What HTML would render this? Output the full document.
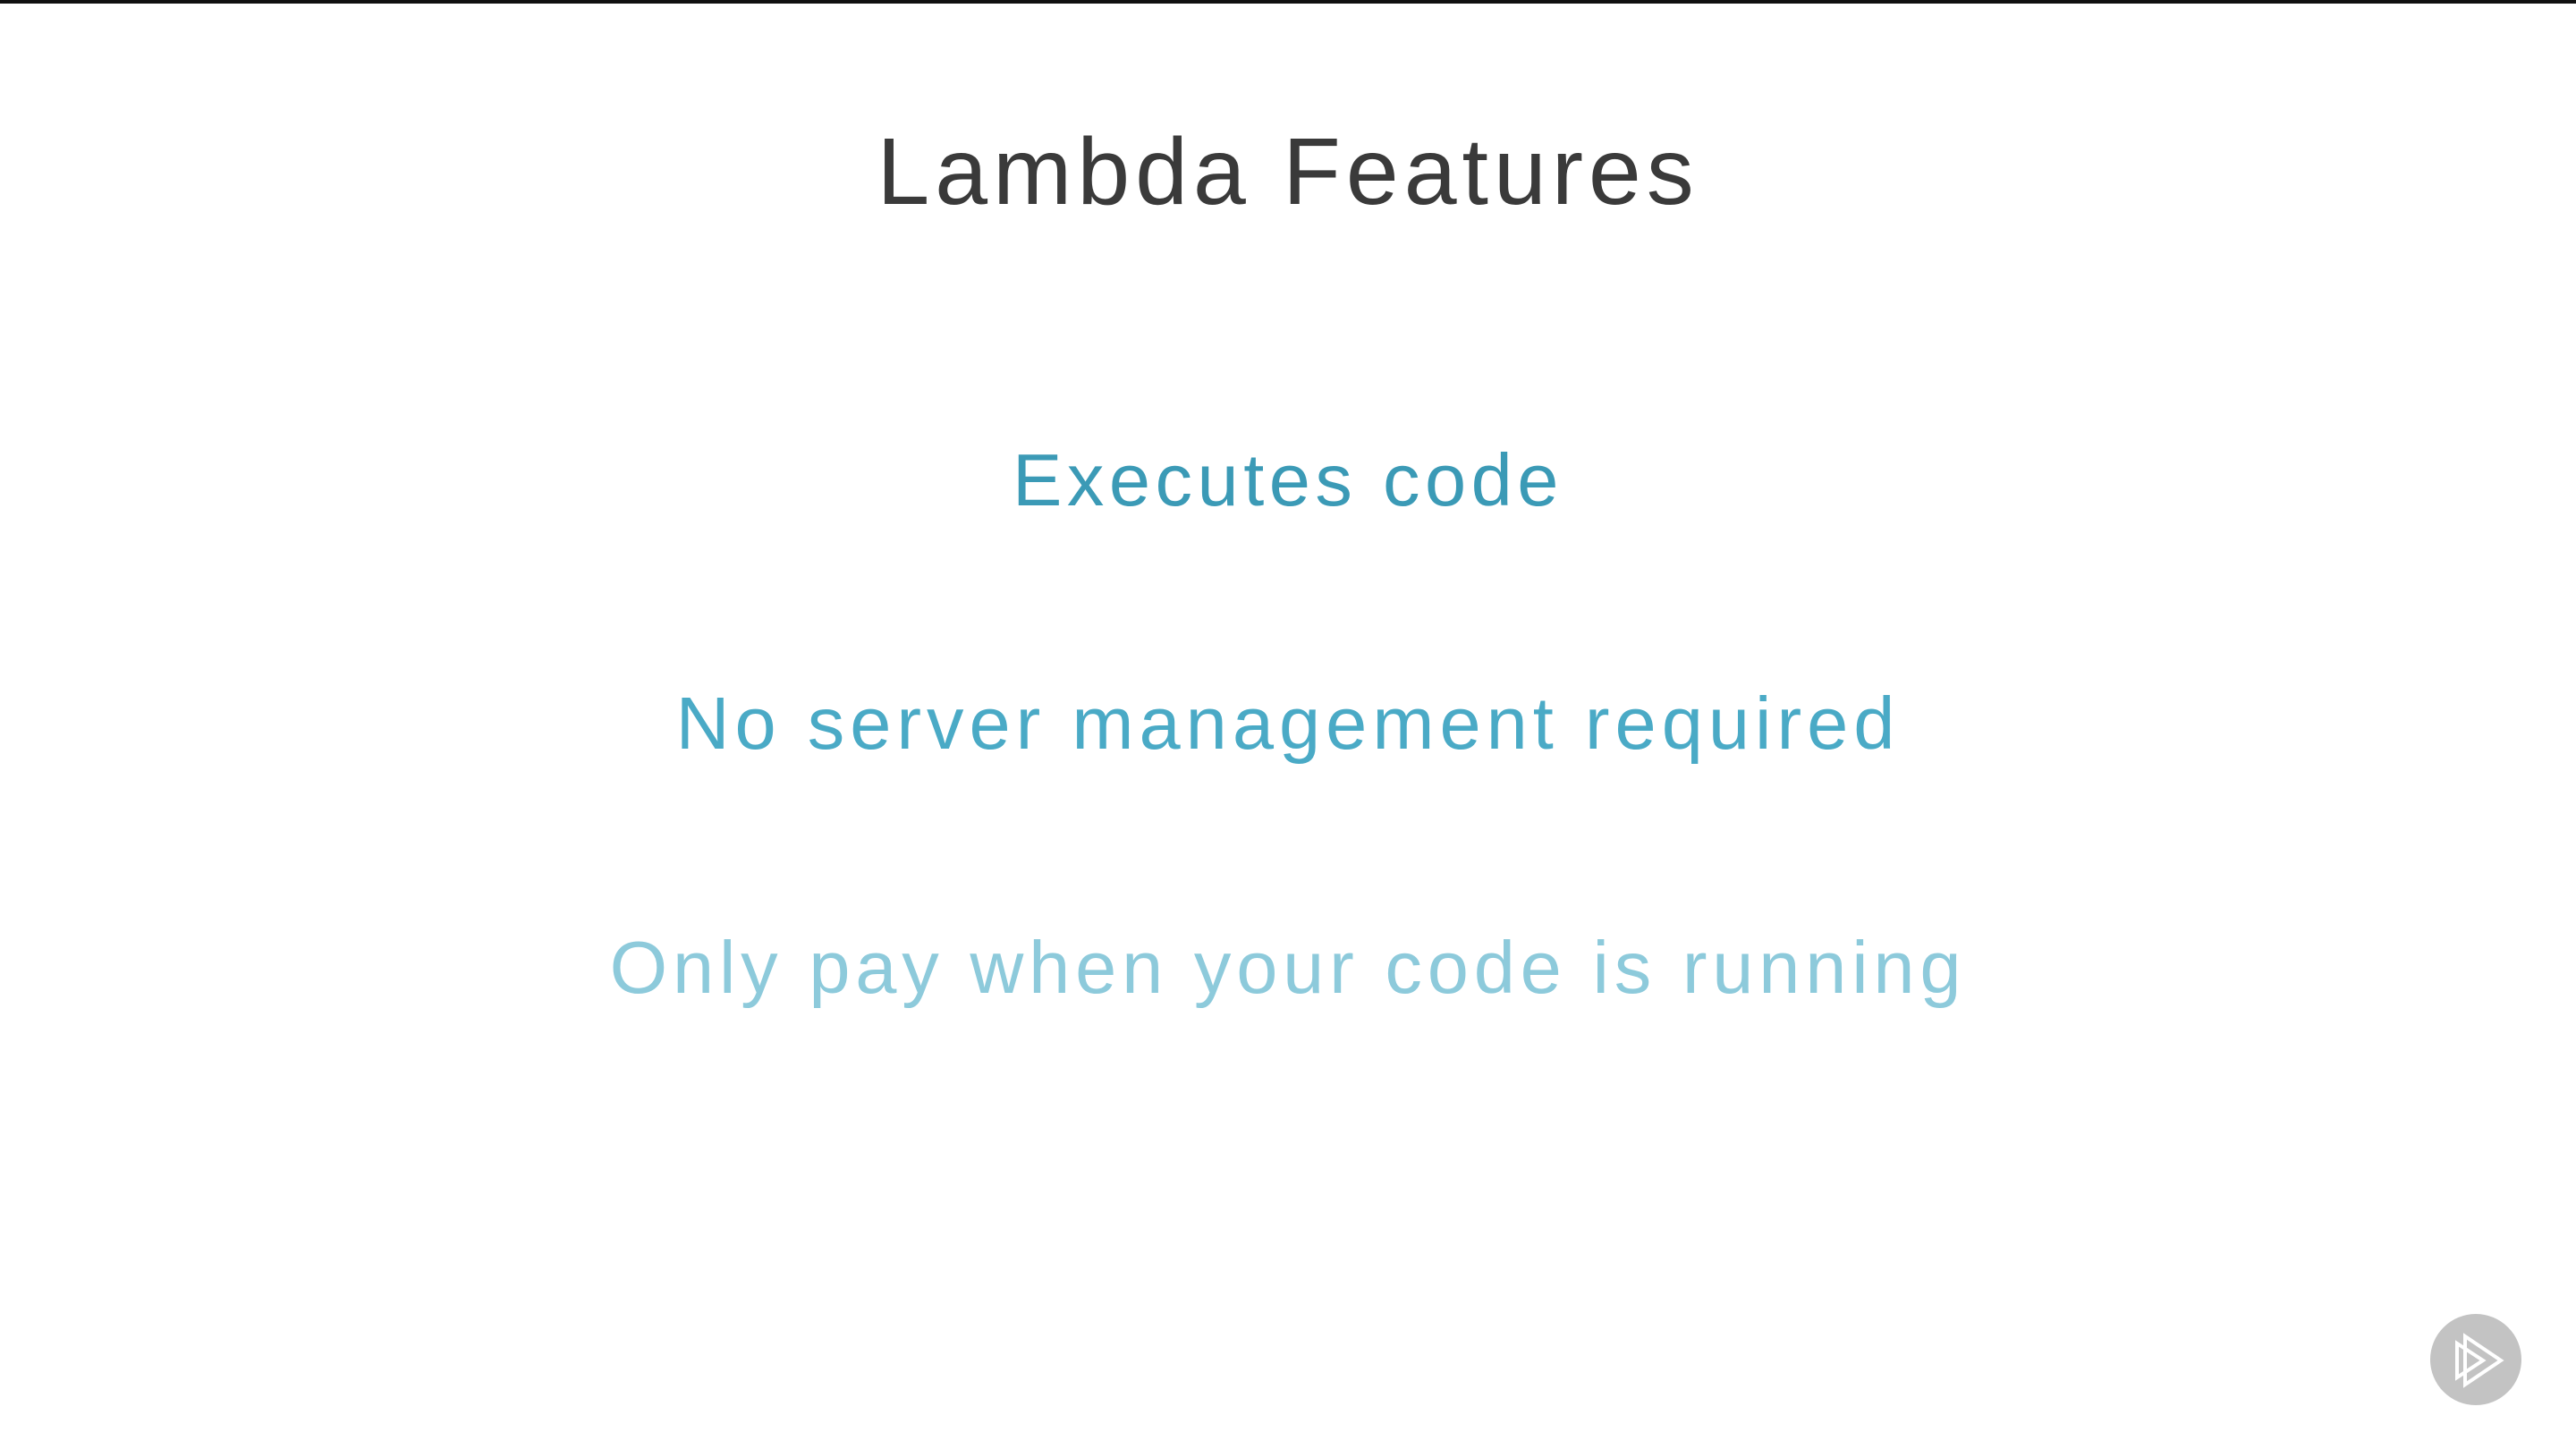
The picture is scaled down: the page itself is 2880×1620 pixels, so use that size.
<!DOCTYPE html>
<html><head><meta charset="utf-8"><style>
html,body{margin:0;padding:0;width:2880px;height:1620px;background:#fff;overflow:hidden;position:relative;font-family:"Liberation Sans",sans-serif}
.bar{position:absolute;left:0;top:0;width:2880px;height:4px;background:#111}
.t{position:absolute;left:0;width:2880px;text-align:center;line-height:1;white-space:nowrap}
</style></head><body>
<div class="bar"></div>
<div class="t" style="top:139px;font-size:106px;color:#3a3a3a;letter-spacing:5.9px">Lambda Features</div>
<div class="t" style="top:495px;font-size:83px;color:#3b9ab6;letter-spacing:5.5px">Executes code</div>
<div class="t" style="top:767px;font-size:83px;color:#4aaac6;letter-spacing:6px">No server management required</div>
<div class="t" style="top:1040px;font-size:83px;color:#8dcadb;letter-spacing:5.8px">Only pay when your code is running</div>
<svg style="position:absolute;left:2716px;top:1468px" width="104" height="104" viewBox="0 0 104 104">
<circle cx="52" cy="52" r="51" fill="#c3c3c3"/>
<g fill="none" stroke="#fff" stroke-width="4" stroke-linejoin="miter">
<path d="M31 34 L31 72 L60 53 Z"/>
<path d="M40 26 L40 80 L80 53 Z"/>
</g>
</svg>
</body></html>
